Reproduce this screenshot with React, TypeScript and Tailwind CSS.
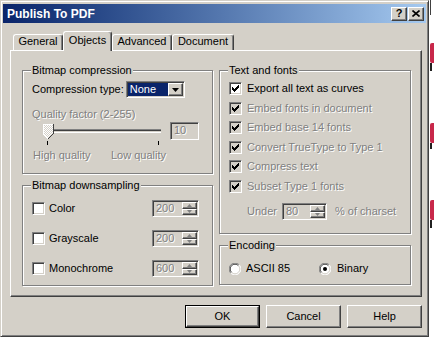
import React from "react";

const dis = "text-[#808080] [text-shadow:1px_1px_0_#fff]";
const sunken =
  "border border-t-[#808080] border-l-[#808080] border-b-white border-r-white shadow-[inset_1px_1px_0_#404040,inset_-1px_-1px_0_#d4d0c8]";
const raised =
  "border border-t-white border-l-white border-r-[#404040] border-b-[#404040] shadow-[inset_-1px_-1px_0_#808080]";

function Check({ on = false, disabled = false }: { on?: boolean; disabled?: boolean }) {
  return (
    <span
      className={`w-[13px] h-[13px] shrink-0 flex items-center justify-center ${sunken} ${
        disabled ? "bg-[#d4d0c8]" : "bg-white"
      }`}
    >
      {on && (
        <svg width="7" height="7" viewBox="0 0 7 7" shapeRendering="crispEdges">
          <path d="M0 2h1v1h1v1h1v-1h1v-1h1v-1h1v-1h1v3h-1v1h-1v1h-1v1h-1v1h-1v-1h-1v-1h-1z" fill="#000" />
        </svg>
      )}
    </span>
  );
}

function Radio({ on = false }: { on?: boolean }) {
  return (
    <svg width="12" height="12" viewBox="0 0 12 12" className="shrink-0">
      <circle cx="6" cy="6" r="5.5" fill="#fff" />
      <path d="M1.8 10.2A5.5 5.5 0 0 1 10.2 1.8" fill="none" stroke="#808080" />
      <path d="M2.6 9.4A4.5 4.5 0 0 1 9.4 2.6" fill="none" stroke="#404040" />
      <path d="M10.2 1.8A5.5 5.5 0 0 1 1.8 10.2" fill="none" stroke="#fff" />
      <path d="M9.4 2.6A4.5 4.5 0 0 1 2.6 9.4" fill="none" stroke="#d4d0c8" />
      {on && <circle cx="6" cy="6" r="2" fill="#000" />}
    </svg>
  );
}

function Arrow({ down = false }: { down?: boolean }) {
  return (
    <span className={`flex-1 flex items-center justify-center bg-[#d4d0c8] ${raised}`}>
      <svg width="5" height="3" viewBox="0 0 5 3">
        <path d={down ? "M0 0h5L2.5 3z" : "M0 3h5L2.5 0z"} fill="#808080" />
      </svg>
    </span>
  );
}

function Spin({ value, className }: { value: string; className: string }) {
  return (
    <div className={`h-[17px] flex bg-[#d4d0c8] ${sunken} p-[1px] ${className}`}>
      <span className={`flex-1 pl-[2px] leading-[13px] ${dis}`}>{value}</span>
      <div className="w-[15px] flex flex-col">
        <Arrow />
        <Arrow down />
      </div>
    </div>
  );
}

function Group({
  title,
  className,
  children,
}: {
  title: string;
  className: string;
  children: React.ReactNode;
}) {
  return (
    <fieldset
      className={`border border-[#808080] shadow-[1px_1px_0_#fff,inset_1px_1px_0_#fff] px-[9px] ${className}`}
    >
      <legend className="px-px -ml-px bg-[#d4d0c8]">{title}</legend>
      {children}
    </fieldset>
  );
}

function Tab({ w, on = false, children }: { w: string; on?: boolean; children: React.ReactNode }) {
  return (
    <div
      className={`${w} flex justify-center rounded-t-[3px] bg-[#d4d0c8] border-t border-l border-r border-t-white border-l-white border-r-[#404040] shadow-[inset_-1px_0_0_#808080] ${
        on ? "h-[20px] pt-[2px]" : "h-[16px] mb-px"
      }`}
    >
      {children}
    </div>
  );
}

function Btn({ def = false, children }: { def?: boolean; children: React.ReactNode }) {
  return (
    <div className={`w-[75px] h-[23px] ${def ? "border border-black" : ""}`}>
      <div className={`w-full h-full flex items-center justify-center bg-[#d4d0c8] ${raised}`}>
        {children}
      </div>
    </div>
  );
}

function Slider() {
  return (
    <svg width="138" height="23" viewBox="0 0 138 23" shapeRendering="crispEdges">
      <defs>
        <pattern id="dither" width="2" height="2" patternUnits="userSpaceOnUse">
          <rect width="2" height="2" fill="#d4d0c8" />
          <rect width="1" height="1" fill="#fff" />
          <rect x="1" y="1" width="1" height="1" fill="#fff" />
        </pattern>
      </defs>
      <rect x="13" y="7" width="116" height="1" fill="#808080" />
      <rect x="13" y="8" width="116" height="1" fill="#404040" />
      <rect x="13" y="9" width="116" height="1" fill="#d4d0c8" />
      <rect x="13" y="10" width="116" height="1" fill="#fff" />
      <polygon points="11,2 21,2 21,12 16,17 11,12" fill="url(#dither)" />
      <path d="M11 2h10M11 2v10l5 5" stroke="#fff" fill="none" />
      <path d="M21 2v10l-5 5" stroke="#404040" fill="none" />
      <rect x="15" y="19" width="1" height="4" fill="#000" />
      <rect x="126" y="19" width="1" height="4" fill="#000" />
    </svg>
  );
}

function DownRow({ label, value }: { label: string; value: string }) {
  return (
    <div className="h-[17px] flex items-center">
      <Check />
      <span className="ml-[4px]">{label}</span>
      <Spin value={value} className="w-[47px] ml-auto" />
    </div>
  );
}

const fontItems = [
  "Embed fonts in document",
  "Embed base 14 fonts",
  "Convert TrueType to Type 1",
  "Compress text",
  "Subset Type 1 fonts",
];

export default function App() {
  return (
    <div className="w-[434px] h-[338px] flex bg-white overflow-hidden font-['Liberation_Sans',Arial,sans-serif] text-[11px] leading-[13px] text-black">
      <div className="w-[429px] h-[337px] shrink-0 flex flex-col bg-[#d4d0c8] border border-t-[#d4d0c8] border-l-[#d4d0c8] border-r-[#404040] border-b-[#404040] shadow-[inset_1px_1px_0_#fff,inset_-1px_-1px_0_#808080] px-[2px] pt-[3px]">
        {/* title bar */}
        <div className="h-[19px] flex items-center bg-linear-to-r from-[#0a246a] to-[#a6caf0] pl-[4px] pr-[2px]">
          <span className="text-white font-bold text-[12px] leading-[14px]">Publish To PDF</span>
          <div className="ml-auto flex gap-[1px]">
            <div className={`w-[16px] h-[14px] flex items-center justify-center bg-[#d4d0c8] ${raised}`}>
              <span className="font-bold text-[11px] leading-[11px]">?</span>
            </div>
            <div className={`w-[16px] h-[14px] flex items-center justify-center bg-[#d4d0c8] ${raised}`}>
              <svg width="8" height="7" viewBox="0 0 8 7">
                <path d="M0.5 0.5l7 6M7.5 0.5l-7 6" stroke="#000" strokeWidth="1.6" />
              </svg>
            </div>
          </div>
        </div>

        {/* tabs */}
        <div className="mt-[8px] ml-[7px] h-[20px] flex items-end pl-[3px] relative z-10">
          <Tab w="w-[50px]">General</Tab>
          <Tab w="w-[49px]" on>
            Objects
          </Tab>
          <Tab w="w-[60px]">Advanced</Tab>
          <Tab w="w-[62px]">Document</Tab>
        </div>

        {/* panel */}
        <div className="-mt-px ml-[7px] w-[412px] h-[247px] shrink-0 border border-t-white border-l-white border-r-[#404040] border-b-[#404040] shadow-[inset_-1px_-1px_0_#808080] pt-[13px] pl-[11px] flex gap-[6px]">
          <div className="w-[191px] flex flex-col gap-[5px]">
            <Group title="Bitmap compression" className="h-[110px]">
              <div className="mt-[4px] flex items-center gap-[2px]">
                <span>Compression type:</span>
                <div className={`w-[59px] h-[17px] flex bg-white ${sunken} p-[1px]`}>
                  <span className="w-[40px] bg-[#0a246a] text-white pl-[2px] leading-[13px]">None</span>
                  <div className={`ml-auto w-[15px] flex items-center justify-center bg-[#d4d0c8] ${raised}`}>
                    <svg width="7" height="4" viewBox="0 0 7 4">
                      <path d="M0 0h7L3.5 4z" fill="#000" />
                    </svg>
                  </div>
                </div>
              </div>
              <div className={`mt-[10px] ${dis}`}>Quality factor (2-255)</div>
              <div className="mt-px flex h-[23px]">
                <Slider />
                <div className={`w-[29px] h-[18px] bg-[#d4d0c8] ${sunken} pl-[3px] pt-[1px] ${dis}`}>10</div>
              </div>
              <div className={`mt-[4px] flex pl-px ${dis}`}>
                <span className="w-[78px]">High quality</span>
                <span>Low quality</span>
              </div>
            </Group>

            <Group title="Bitmap downsampling" className="h-[107px]">
              <div className="mt-[8px] flex flex-col gap-[13px] pr-[4px]">
                <DownRow label="Color" value="200" />
                <DownRow label="Grayscale" value="200" />
                <DownRow label="Monochrome" value="600" />
              </div>
            </Group>
          </div>

          <div className="w-[192px] flex flex-col gap-[5px]">
            <Group title="Text and fonts" className="h-[170px]">
              <div className="mt-[2px] flex flex-col">
                <div className="h-[19.5px] flex items-center gap-[5px]">
                  <Check on />
                  <span>Export all text as curves</span>
                </div>
                {fontItems.map((t) => (
                  <div key={t} className="h-[19.5px] flex items-center gap-[5px]">
                    <Check on disabled />
                    <span className={dis}>{t}</span>
                  </div>
                ))}
              </div>
              <div className="mt-[7px] h-[17px] flex items-center pl-[18px]">
                <span className={dis}>Under</span>
                <Spin value="80" className="w-[45px] ml-[5px]" />
                <span className={`ml-[8px] ${dis}`}>% of charset</span>
              </div>
            </Group>

            <Group title="Encoding" className="h-[46px]">
              <div className="mt-[10px] flex items-center">
                <div className="w-[90px] flex items-center gap-[5px]">
                  <Radio />
                  <span>ASCII 85</span>
                </div>
                <div className="flex items-center gap-[6px]">
                  <Radio on />
                  <span>Binary</span>
                </div>
              </div>
            </Group>
          </div>
        </div>

        {/* buttons */}
        <div className="mt-[8px] flex justify-end gap-[6px] pr-[4px]">
          <Btn def>OK</Btn>
          <Btn>Cancel</Btn>
          <Btn>Help</Btn>
        </div>
      </div>

      {/* what shows of the window behind */}
      <div className="flex-1 flex flex-col">
        <div className="ml-[1px] w-px h-[15px] bg-[#404040]" />
        <div className="mt-[28px] ml-[1px] w-[4px] h-[20px] rounded-l-[2px] bg-[#c8284a]" />
        <div className="ml-[1px] w-[2px] h-[8px] bg-[#202020]" />
        <div className="mt-[52px] ml-[1px] w-[4px] h-[20px] rounded-l-[2px] bg-[#c8284a]" />
        <div className="ml-[1px] w-[2px] h-[6px] bg-[#202020]" />
        <div className="mt-[51px] ml-[1px] w-[4px] h-[20px] rounded-l-[2px] bg-[#c8284a]" />
        <div className="ml-[1px] w-[2px] h-[8px] bg-[#202020]" />
      </div>
    </div>
  );
}
